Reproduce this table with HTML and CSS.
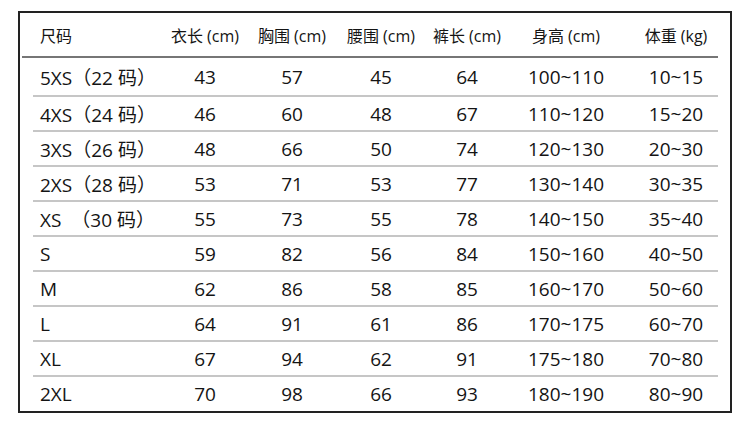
FILE: index.html
```html
<!DOCTYPE html>
<html lang="zh">
<head>
<meta charset="utf-8">
<link rel="stylesheet" href="styles.css">
</head>
<body>
<div class="box">
  <div class="row head">
    <div class="c lab">尺码</div>
    <div class="c">衣长 (cm)</div>
    <div class="c">胸围 (cm)</div>
    <div class="c">腰围 (cm)</div>
    <div class="c">裤长 (cm)</div>
    <div class="c">身高 (cm)</div>
    <div class="c last">体重 (kg)</div>
  </div>
  <div class="row first"><div class="c lab">5XS（22 码）</div><div class="c">43</div><div class="c">57</div><div class="c">45</div><div class="c">64</div><div class="c">100~110</div><div class="c last">10~15</div></div>
  <div class="row"><div class="c lab">4XS（24 码）</div><div class="c">46</div><div class="c">60</div><div class="c">48</div><div class="c">67</div><div class="c">110~120</div><div class="c last">15~20</div></div>
  <div class="row"><div class="c lab">3XS（26 码）</div><div class="c">48</div><div class="c">66</div><div class="c">50</div><div class="c">74</div><div class="c">120~130</div><div class="c last">20~30</div></div>
  <div class="row"><div class="c lab">2XS（28 码）</div><div class="c">53</div><div class="c">71</div><div class="c">53</div><div class="c">77</div><div class="c">130~140</div><div class="c last">30~35</div></div>
  <div class="row"><div class="c lab">XS&nbsp;&nbsp;（30 码）</div><div class="c">55</div><div class="c">73</div><div class="c">55</div><div class="c">78</div><div class="c">140~150</div><div class="c last">35~40</div></div>
  <div class="row"><div class="c lab">S</div><div class="c">59</div><div class="c">82</div><div class="c">56</div><div class="c">84</div><div class="c">150~160</div><div class="c last">40~50</div></div>
  <div class="row"><div class="c lab">M</div><div class="c">62</div><div class="c">86</div><div class="c">58</div><div class="c">85</div><div class="c">160~170</div><div class="c last">50~60</div></div>
  <div class="row"><div class="c lab">L</div><div class="c">64</div><div class="c">91</div><div class="c">61</div><div class="c">86</div><div class="c">170~175</div><div class="c last">60~70</div></div>
  <div class="row"><div class="c lab">XL</div><div class="c">67</div><div class="c">94</div><div class="c">62</div><div class="c">91</div><div class="c">175~180</div><div class="c last">70~80</div></div>
  <div class="row end"><div class="c lab">2XL</div><div class="c">70</div><div class="c">98</div><div class="c">66</div><div class="c">93</div><div class="c">180~190</div><div class="c last">80~90</div></div>
</div>
</body>
</html>
```

FILE: styles.css
```css
html, body {
  margin: 0;
  padding: 0;
  background: #fff;
}
body {
  font-family: "Open Sans", "Noto Sans CJK SC", sans-serif;
  color: #141414;
}
.box {
  box-sizing: border-box;
  margin: 11px 0 0 18px;
  width: 714px;
  height: 402px;
  border: 2px solid #222;
  display: flex;
  flex-direction: column;
}
.row {
  display: grid;
  grid-template-columns: 130px 84px 90px 88px 84px 114px 95px;
  align-items: center;
  margin: 0 12px 0 13px;
  height: 35px;
  box-sizing: border-box;
  border-bottom: 2px solid #c6c6c6;
  font-size: 19px;
}
.row.head {
  height: 45px;
  margin-left: 2px;
  padding-left: 11px;
  border-bottom: 2px solid #767676;
  font-size: 16px;
}
.row.first {
  height: 39px;
}
.row.end {
  height: 34px;
  border-bottom: none;
}
.c {
  text-align: center;
  white-space: nowrap;
}
.c.lab {
  text-align: left;
  padding-left: 7px;
}
.c.last {
  padding-left: 11px;
}
```
